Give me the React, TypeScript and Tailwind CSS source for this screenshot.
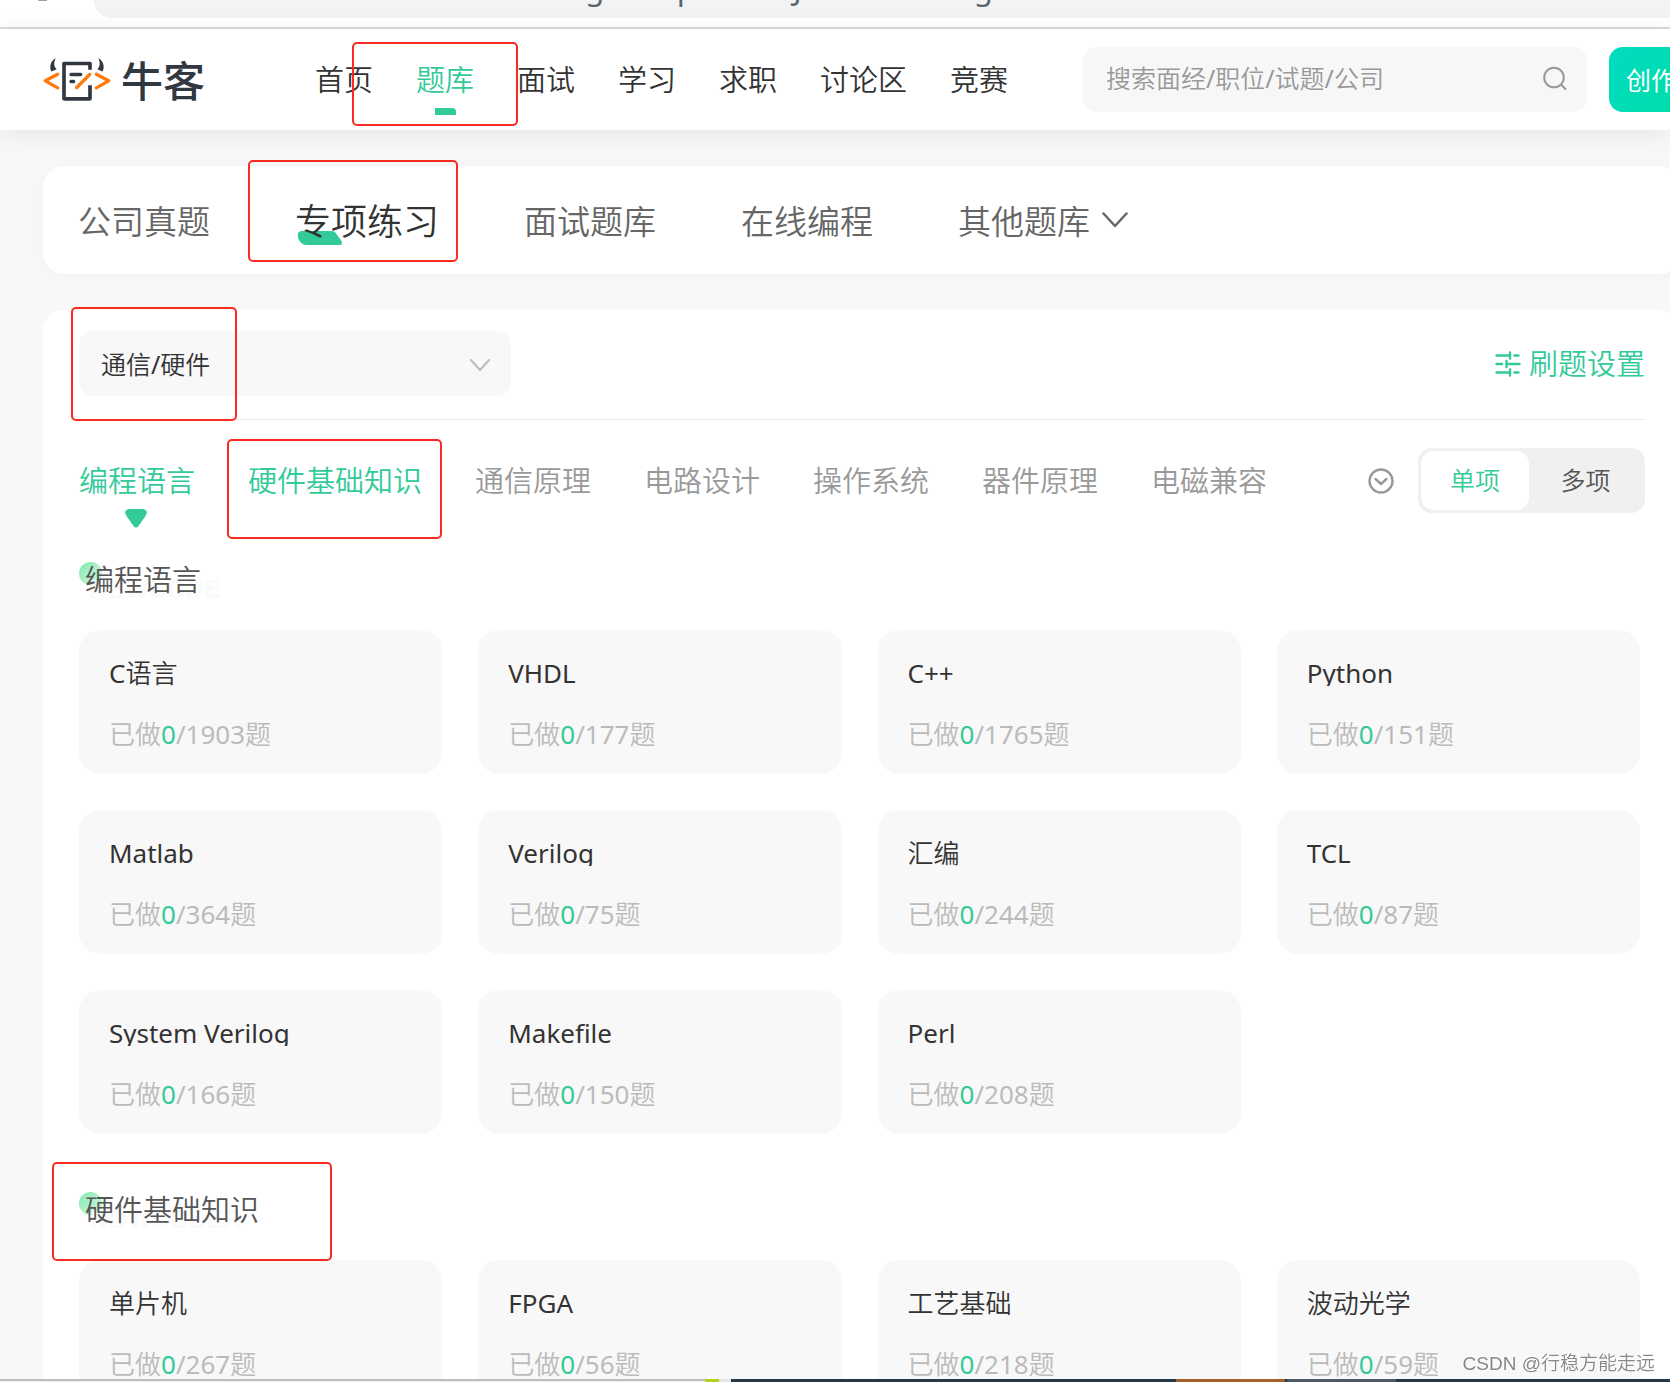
import { useState } from "react";
import clsx from "clsx";

const navItems = ["首页", "题库", "面试", "学习", "求职", "讨论区", "竞赛"];

const tabs = ["公司真题", "专项练习", "面试题库", "在线编程", "其他题库"];

const categories = [
  "编程语言",
  "硬件基础知识",
  "通信原理",
  "电路设计",
  "操作系统",
  "器件原理",
  "电磁兼容",
];

const sections = [
  {
    title: "编程语言",
    ghost: "NEWCODE",
    marked: false,
    items: [
      { name: "C语言", total: 1903 },
      { name: "VHDL", total: 177 },
      { name: "C++", total: 1765 },
      { name: "Python", total: 151 },
      { name: "Matlab", total: 364 },
      { name: "Verilog", total: 75 },
      { name: "汇编", total: 244 },
      { name: "TCL", total: 87 },
      { name: "System Verilog", total: 166 },
      { name: "Makefile", total: 150 },
      { name: "Perl", total: 208 },
    ],
  },
  {
    title: "硬件基础知识",
    ghost: "NOWCODER",
    marked: true,
    items: [
      { name: "单片机", total: 267 },
      { name: "FPGA", total: 56 },
      { name: "工艺基础", total: 218 },
      { name: "波动光学", total: 59 },
    ],
  },
];

// Red annotation frame laid over a highlighted item
function Mark({ className }: { className: string }) {
  return (
    <span
      className={clsx(
        "pointer-events-none absolute z-10 rounded-[5px] border-2 border-[#fb2a1e]",
        className
      )}
    />
  );
}

function Logo() {
  return (
    <a href="#" className="flex flex-none items-center gap-2.5">
      <svg viewBox="38 52 204 134" className="h-[45px] w-[68px]" fill="none">
        <path
          d="M76 55C61 63 56 79 63 95L79 88C70 79 70 68 76 55Z"
          fill="#313842"
        />
        <path
          d="M204 55C219 63 224 79 217 95L201 88C210 79 210 68 204 55Z"
          fill="#313842"
        />
        <path
          d="M179 90V71H101V177H179V136"
          stroke="#313842"
          strokeWidth="11"
          strokeLinejoin="round"
        />
        <path
          d="M122 104H151M122 125H130"
          stroke="#313842"
          strokeWidth="10"
          strokeLinecap="round"
        />
        <path
          d="M139 143L178 104M82 103L45 123L82 144M198 103L235 123L198 144"
          stroke="#ff7a0d"
          strokeWidth="10"
          strokeLinecap="round"
          strokeLinejoin="round"
        />
      </svg>
      <span className="pb-0.5 font-['Noto_Sans_CJK_SC',sans-serif] text-[42px] leading-[44px] font-medium text-[#313842]">
        牛客
      </span>
    </a>
  );
}

function BrowserBar() {
  return (
    <div className="flex h-[29px] flex-none items-start border-b-2 border-[#dadada] bg-white pl-[38px]">
      <span className="h-px w-[9px] flex-none rounded-b-full bg-[#9aa0a6]" />
      <div className="ml-[47px] flex h-[18px] flex-1 items-end overflow-hidden rounded-bl-[28px] bg-[#f1f3f4] pb-3 pl-[18px]">
        <span className="text-[31px] leading-[36px] whitespace-nowrap text-[#5f6368]">
          www.nowcoder.com/exam/intelligent?questionJobId=11&amp;tagId=21002
        </span>
      </div>
    </div>
  );
}

function Header() {
  return (
    <header className="relative z-[1] flex h-[101px] flex-none items-center bg-white pl-[43px] shadow-[0_4px_24px_rgba(0,0,0,0.08)]">
      <Logo />
      <nav className="ml-[110px] flex flex-none gap-[43px]">
        {navItems.map((item) => {
          const active = item === "题库";
          return (
            <a
              key={item}
              href="#"
              className={clsx(
                "relative text-[29px] leading-10 whitespace-nowrap",
                active ? "text-[#32ca99]" : "text-[#333]"
              )}
            >
              {item}
              {active && (
                <>
                  <span className="absolute -bottom-[15px] left-[19px] h-[7px] w-[21px] rounded-tr-[4px] bg-[#32ca99]" />
                  <Mark className="-top-[18px] -right-[44px] -bottom-[26px] -left-[64px]" />
                </>
              )}
            </a>
          );
        })}
      </nav>
      <form className="ml-auto flex h-[65px] w-[504px] flex-none items-center rounded-[14px] bg-[#f7f7f7] pr-5 pb-[3px] pl-[23px]">
        <input
          type="text"
          aria-label="搜索"
          placeholder="搜索面经/职位/试题/公司"
          className="min-w-0 flex-1 bg-transparent text-[25px] leading-9 outline-none placeholder:text-[#999]"
        />
        <button type="button" aria-label="搜索">
          <svg
            viewBox="0 0 24 24"
            className="h-6 w-6"
            fill="none"
            stroke="#999"
            strokeWidth="2"
            strokeLinecap="round"
          >
            <circle cx="11" cy="11.5" r="9.8" />
            <path d="M18.5 19L22.5 23" />
          </svg>
        </button>
      </form>
      <button className="ml-[22px] h-[65px] w-[61px] flex-none overflow-hidden rounded-l-[14px] bg-linear-to-br from-[#00dcc2] to-[#00dcaa] pl-[17px] text-left font-['Noto_Sans_CJK_SC',sans-serif] text-[25px] whitespace-nowrap text-white">
        创作
      </button>
    </header>
  );
}

function TabBar() {
  return (
    <nav className="flex h-[108px] items-center gap-[85px] rounded-[21px] bg-white pt-[3px] pl-[35px] shadow-[0_2px_18px_rgba(0,0,0,0.03)]">
      {tabs.map((tab, index) => {
        const active = tab === "专项练习";
        return (
          <a
            key={tab}
            href="#"
            className={clsx(
              "relative flex items-center leading-[44px] whitespace-nowrap",
              active ? "text-[36px] text-[#333]" : "text-[33px] text-[#666]"
            )}
          >
            {active && (
              <>
                <svg
                  viewBox="0 0 46 14"
                  className="absolute -bottom-px left-0.5 h-[14px] w-[46px]"
                  fill="#32ca99"
                >
                  <path d="M5 0H34Q38 0 39.500 3L44.500 10Q46 14 42 14H10Q4 14 1.500 8Q-1 0 5 0Z" />
                </svg>
                <Mark className="-top-[40px] -right-[19px] -bottom-[18px] -left-[47px]" />
              </>
            )}
            <span className="relative">{tab}</span>
            {index === tabs.length - 1 && (
              <svg
                viewBox="0 0 26 16"
                className="mb-[3px] ml-3 h-4 w-[26px]"
                fill="none"
                stroke="#666"
                strokeWidth="2.500"
                strokeLinecap="round"
                strokeLinejoin="round"
              >
                <path d="M1.500 1.500L13 14L24.500 1.500" />
              </svg>
            )}
          </a>
        );
      })}
    </nav>
  );
}

function FilterRow() {
  return (
    <div className="flex items-center justify-between border-b border-[#eee] pb-[23px]">
      <div className="relative h-[65px] w-[432px]">
        <select
          aria-label="方向"
          className="h-full w-full appearance-none rounded-[14px] bg-[#f8f8f8] pt-0.5 pl-[22px] text-[25px] text-[#333] outline-none"
        >
          <option>通信/硬件</option>
        </select>
        <svg
          viewBox="0 0 20 12"
          className="pointer-events-none absolute top-7 right-[21px] h-3 w-5"
          fill="none"
          stroke="#bbb"
          strokeWidth="2"
          strokeLinecap="round"
          strokeLinejoin="round"
        >
          <path d="M1 1L10 11L19 1" />
        </svg>
        <Mark className="-top-[24px] -bottom-[25px] -left-[8px] w-[166px]" />
      </div>
      <button className="flex items-center gap-2 text-[29px] leading-10 text-[#32ca99]">
        <svg
          viewBox="0 0 26 26"
          className="h-[26px] w-[26px]"
          fill="none"
          stroke="currentColor"
          strokeWidth="2.400"
          strokeLinecap="round"
        >
          <path d="M1.500 4.500H15M15 1.500V7.500M19.500 4.500H23.500" />
          <path d="M1.500 13H7M11.500 10V16M11.500 13H24.500" />
          <path d="M1.500 21.500H15M15 18.500V24.500M19.500 21.500H23.500" />
        </svg>
        刷题设置
      </button>
    </div>
  );
}

function CategoryRow() {
  const [mode, setMode] = useState("单项");

  return (
    <div className="flex items-center pt-7">
      <div className="flex gap-[53px]">
        {categories.map((category, index) => (
          <a
            key={category}
            href="#"
            className={clsx(
              "relative text-[29px] leading-10 whitespace-nowrap",
              index < 2 ? "text-[#32ca99]" : "text-[#999]"
            )}
          >
            {category}
            {index === 0 && (
              <svg
                viewBox="0 0 22 19"
                className="absolute -bottom-[27px] left-[46px] h-[19px] w-[22px]"
                fill="#32ca99"
              >
                <path d="M4 0H18Q24 1.500 20.500 7L13.500 17Q11 20 8.500 17L1.500 7Q-2 1.500 4 0Z" />
              </svg>
            )}
            {index === 1 && (
              <Mark className="-top-[22px] -right-[20px] -bottom-[38px] -left-[21px]" />
            )}
          </a>
        ))}
      </div>
      <button aria-label="展开更多" className="mr-6 ml-auto">
        <svg
          viewBox="0 0 26 26"
          className="h-[26px] w-[26px]"
          fill="none"
          stroke="#999"
          strokeWidth="2.400"
          strokeLinecap="round"
          strokeLinejoin="round"
        >
          <circle cx="13" cy="13" r="11.500" />
          <path d="M7.500 11L13 16L18.500 11" />
        </svg>
      </button>
      <div className="grid h-[65px] w-[227px] grid-cols-[108px_1fr] rounded-[14px] bg-[#f0f0f0] p-[3px]">
        {["单项", "多项"].map((item) => (
          <button
            key={item}
            onClick={() => setMode(item)}
            className={clsx(
              "rounded-[13px] text-[25px]",
              mode === item ? "bg-white text-[#32ca99]" : "text-[#555]"
            )}
          >
            {item}
          </button>
        ))}
      </div>
    </div>
  );
}

export default function App() {
  return (
    <div className="flex h-screen flex-col overflow-hidden bg-[#f6f8fa] font-['Noto_Sans','Noto_Sans_CJK_SC_DemiLight','Noto_Sans_CJK_SC',sans-serif]">
      <BrowserBar />
      <Header />
      <main className="min-h-0 flex-1 overflow-hidden pl-[43px]">
        <div className="-mr-[11px] pt-9">
          <TabBar />
          <div className="mt-9 rounded-[21px] bg-white px-9 pt-[21px] pb-9">
            <FilterRow />
            <CategoryRow />
            {sections.map((section, index) => (
              <section
                key={section.title}
                className={index === 0 ? "mt-[49px]" : "mt-[58px]"}
              >
                <div className="relative flex h-[68px] items-start">
                  <span className="absolute top-0 left-0 h-[23px] w-[23px] rounded-full bg-linear-to-br from-[#7fe8ae] to-[#d5f8e4]" />
                  <span
                    aria-hidden="true"
                    className="absolute top-[13px] left-[11px] font-['Liberation_Sans',sans-serif] text-[25px] leading-7 font-bold text-[#fafafa]"
                  >
                    {section.ghost}
                  </span>
                  <h2 className="relative ml-1.5 text-[29px] leading-9 text-[#555]">
                    {section.title}
                  </h2>
                  {section.marked && (
                    <Mark className="-top-[30px] -left-[27px] h-[99px] w-[280px]" />
                  )}
                </div>
                <div className="mr-[5px] grid grid-cols-4 gap-9">
                  {section.items.map((item) => (
                    <a
                      key={item.name}
                      href="#"
                      className="h-36 rounded-[21px] bg-[#f8f8f8] px-[30px] pt-[31px]"
                    >
                      <h3 className="overflow-hidden text-[26px] leading-[25px] text-[#333]">
                        {item.name}
                      </h3>
                      <p className="mt-9 text-[26px] leading-[25px] text-[#bbb]">
                        已做<span className="text-[#32ca99]">0</span>/
                        {item.total}题
                      </p>
                    </a>
                  ))}
                </div>
              </section>
            ))}
          </div>
        </div>
      </main>

      {/* Sliver of the desktop taskbar */}
      <div className="flex h-[3px] flex-none bg-[#263845]">
        <span className="w-[705px] border-b border-[#eee] bg-[#bcbfbe]" />
        <span className="w-[14px] bg-[#b5d11c]" />
        <span className="w-3 bg-[#e4e4e4]" />
        <span className="ml-[445px] w-[109px] bg-[#a5622f]" />
        <span className="ml-0.5 w-[109px] bg-[#4b5866]" />
      </div>
      <span className="fixed right-[15px] bottom-1.5 z-20 font-['Liberation_Sans','Noto_Sans_CJK_SC_DemiLight','Noto_Sans_CJK_SC',sans-serif] text-[19px] leading-6 text-[#888] [text-shadow:-1px_-1px_0_#fff]">
        CSDN @行稳方能走远
      </span>
    </div>
  );
}
